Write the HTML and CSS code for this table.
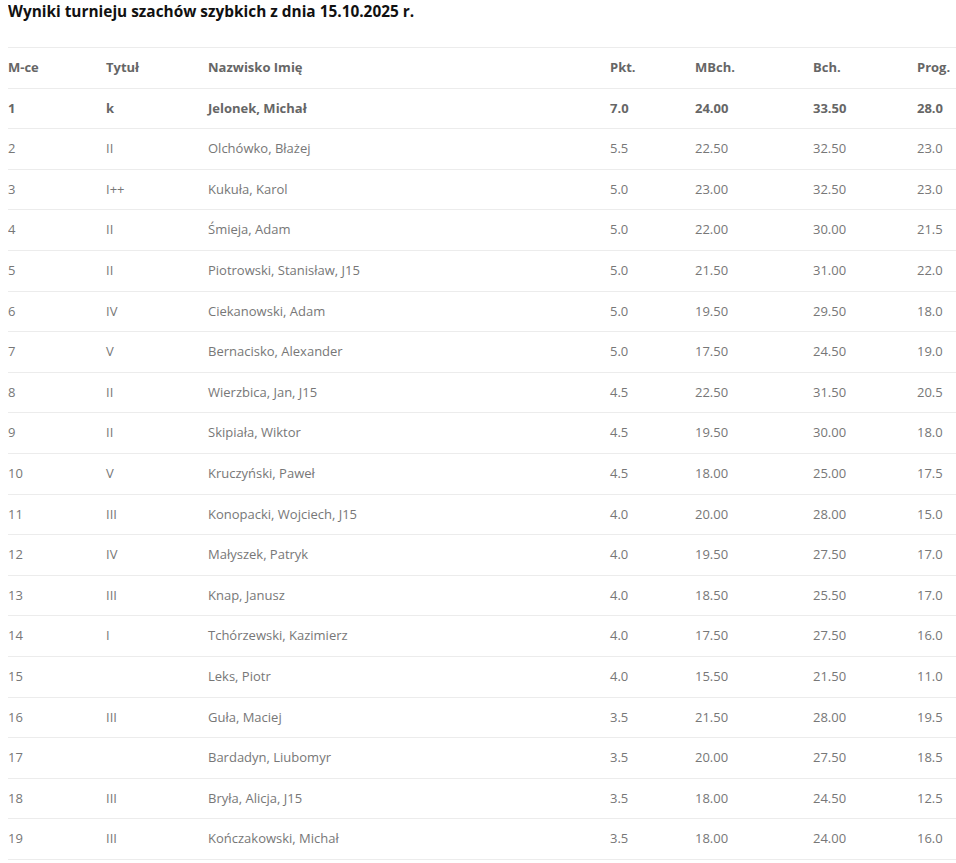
FILE: index.html
```html
<!DOCTYPE html>
<html lang="pl">
<head>
<meta charset="utf-8">
<title>Wyniki turnieju</title>
<link rel="stylesheet" href="styles.css">
</head>
<body>
<h1 class="title">Wyniki turnieju szachów szybkich z dnia 15.10.2025 r.</h1>
<table class="results">
<colgroup>
<col class="c-pos"><col class="c-title"><col class="c-name"><col class="c-pkt"><col class="c-mbch"><col class="c-bch"><col class="c-prog">
</colgroup>
<thead>
<tr><th>M-ce</th><th>Tytuł</th><th>Nazwisko Imię</th><th>Pkt.</th><th>MBch.</th><th>Bch.</th><th>Prog.</th></tr>
</thead>
<tbody>
<tr class="winner"><td>1</td><td>k</td><td>Jelonek, Michał</td><td>7.0</td><td>24.00</td><td>33.50</td><td>28.0</td></tr>
<tr><td>2</td><td>II</td><td>Olchówko, Błażej</td><td>5.5</td><td>22.50</td><td>32.50</td><td>23.0</td></tr>
<tr><td>3</td><td>I++</td><td>Kukuła, Karol</td><td>5.0</td><td>23.00</td><td>32.50</td><td>23.0</td></tr>
<tr><td>4</td><td>II</td><td>Śmieja, Adam</td><td>5.0</td><td>22.00</td><td>30.00</td><td>21.5</td></tr>
<tr><td>5</td><td>II</td><td>Piotrowski, Stanisław, J15</td><td>5.0</td><td>21.50</td><td>31.00</td><td>22.0</td></tr>
<tr><td>6</td><td>IV</td><td>Ciekanowski, Adam</td><td>5.0</td><td>19.50</td><td>29.50</td><td>18.0</td></tr>
<tr><td>7</td><td>V</td><td>Bernacisko, Alexander</td><td>5.0</td><td>17.50</td><td>24.50</td><td>19.0</td></tr>
<tr><td>8</td><td>II</td><td>Wierzbica, Jan, J15</td><td>4.5</td><td>22.50</td><td>31.50</td><td>20.5</td></tr>
<tr><td>9</td><td>II</td><td>Skipiała, Wiktor</td><td>4.5</td><td>19.50</td><td>30.00</td><td>18.0</td></tr>
<tr><td>10</td><td>V</td><td>Kruczyński, Paweł</td><td>4.5</td><td>18.00</td><td>25.00</td><td>17.5</td></tr>
<tr><td>11</td><td>III</td><td>Konopacki, Wojciech, J15</td><td>4.0</td><td>20.00</td><td>28.00</td><td>15.0</td></tr>
<tr><td>12</td><td>IV</td><td>Małyszek, Patryk</td><td>4.0</td><td>19.50</td><td>27.50</td><td>17.0</td></tr>
<tr><td>13</td><td>III</td><td>Knap, Janusz</td><td>4.0</td><td>18.50</td><td>25.50</td><td>17.0</td></tr>
<tr><td>14</td><td>I</td><td>Tchórzewski, Kazimierz</td><td>4.0</td><td>17.50</td><td>27.50</td><td>16.0</td></tr>
<tr><td>15</td><td></td><td>Leks, Piotr</td><td>4.0</td><td>15.50</td><td>21.50</td><td>11.0</td></tr>
<tr><td>16</td><td>III</td><td>Guła, Maciej</td><td>3.5</td><td>21.50</td><td>28.00</td><td>19.5</td></tr>
<tr><td>17</td><td></td><td>Bardadyn, Liubomyr</td><td>3.5</td><td>20.00</td><td>27.50</td><td>18.5</td></tr>
<tr><td>18</td><td>III</td><td>Bryła, Alicja, J15</td><td>3.5</td><td>18.00</td><td>24.50</td><td>12.5</td></tr>
<tr><td>19</td><td>III</td><td>Kończakowski, Michał</td><td>3.5</td><td>18.00</td><td>24.00</td><td>16.0</td></tr>
</tbody>
</table>
</body>
</html>
```
FILE: styles.css
```css
html, body {
  background: #fff;
}
body {
  margin: 0 0 0 8px;
  font-family: "Open Sans", "Noto Sans", sans-serif;
  font-size: 13px;
  color: #777;
}
.title {
  margin: 0;
  padding-top: 0;
  font-size: 15.4px;
  line-height: 24px;
  font-weight: 700;
  color: #111;
}
.results {
  margin-top: 23px;
  width: 948px;
  border-collapse: collapse;
  table-layout: fixed;
}
.c-pos { width: 98px; }
.c-title { width: 102px; }
.c-name { width: 402px; }
.c-pkt { width: 85px; }
.c-mbch { width: 118px; }
.c-bch { width: 104px; }
.c-prog { width: 39px; }
.results th,
.results td {
  text-align: left;
  padding: 10px 0;
  line-height: 19.6px;
  border-top: 1px solid #ececec;
  white-space: nowrap;
  vertical-align: middle;
}
.results th {
  font-weight: 700;
  color: #666;
}
.results tbody tr:last-child td {
  border-bottom: 1px solid #ececec;
}
.results .winner td {
  font-weight: 700;
  color: #666;
}
```
